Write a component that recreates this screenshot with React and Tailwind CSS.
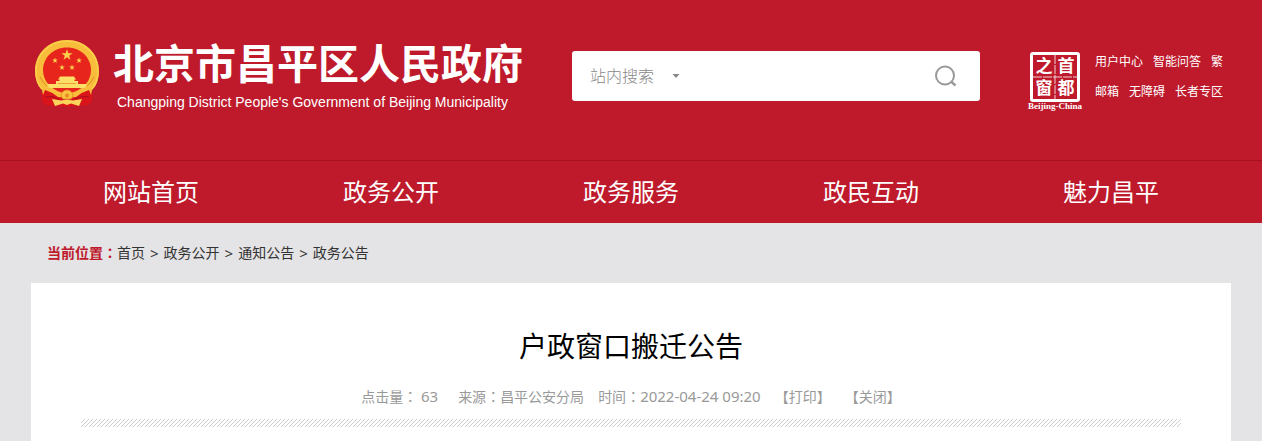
const SANS = "font-['Noto_Sans','Noto_Sans_CJK_SC',sans-serif]";

const NAV = ['网站首页', '政务公开', '政务服务', '政民互动', '魅力昌平'];
const TOP_LINKS = [
  ['用户中心', '智能问答', '繁'],
  ['邮箱', '无障碍', '长者专区'],
];
const CRUMBS = ['首页', '政务公开', '通知公告', '政务公告'];

const STAR =
  'M0 -10 L2.4 -3.2 L9.5 -3.1 L3.8 1.2 L5.9 8.1 L0 4 L-5.9 8.1 L-3.8 1.2 L-9.5 -3.1 L-2.4 -3.2 Z';

function Emblem() {
  return (
    <svg className="h-[68px] w-16 shrink-0" viewBox="0 0 64 68" aria-hidden="true">
      <path d="M8 50 L56 50 Q59 58 55 64 Q49 67 44 65 L38 66 L32 67 L26 66 L20 65 Q14 67 9 64 Q5 58 8 50 Z" fill="#d9141b" />
      <path
        d="M32 0 C14 0 0 13 0 31 C0 39 3 46 7 50 L8 55 L10 50 Q17 52 23 57 L32 58 L41 57 Q47 52 54 50 L56 55 L57 50 C61 46 64 39 64 31 C64 13 50 0 32 0 Z"
        fill="#f8bd3b"
      />
      <path d="M7 49 C2 44 1 37 1 31 C1 14 15 1 32 1 C49 1 63 14 63 31 C63 37 62 44 57 49" fill="none" stroke="#fbd04b" strokeWidth="1.500" />
      <path d="M5 37 Q8 43 12 46 M59 37 Q56 43 52 46" fill="none" stroke="#d98a22" strokeWidth="1" />
      <path d="M32 7.500 C18 7.500 8 18 8 30 C8 42 17 49 25 52 Q32 54 39 52 C47 49 56 42 56 30 C56 18 46 7.500 32 7.500 Z" fill="#e8251d" />
      <g fill="#fbd04b">
        <path d={STAR} transform="translate(32 15) scale(.58)" />
        <path d={STAR} transform="translate(20 20.500) scale(.3)" />
        <path d={STAR} transform="translate(44 20.500) scale(.3)" />
        <path d={STAR} transform="translate(27 27.500) scale(.3)" />
        <path d={STAR} transform="translate(37 27.500) scale(.3)" />
      </g>
      <path
        d="M25 36.500 L39 36.500 L41 39.500 L39.500 39.500 L39.500 41 L43 41 L43 44 L52 44 L50 48 L14 48 L12 44 L21 44 L21 41 L24.500 41 L24.500 39.500 L23 39.500 Z"
        fill="#fbdf66"
      />
      <path d="M23 43.500 L41 43.500" stroke="#ee8a2c" strokeWidth=".8" />
      <path d="M26 56 A6 6 0 0 1 38 56 L36 59 L28 59 Z" fill="#f9c33f" stroke="#e08b20" strokeWidth=".8" />
      <circle cx="32" cy="55.500" r="2" fill="#e58a24" />
      <path d="M10 57 Q17 55 24 59 M54 57 Q47 55 40 59" fill="none" stroke="#a90f1c" strokeWidth="1" />
      <path d="M17 59 L26 60.500 L32 59.500 L38 60.500 L47 59 L44 66 L36 63.500 L32 65 L28 63.500 L20 66 Z" fill="#fbd45c" />
    </svg>
  );
}

function CapitalWindow() {
  return (
    <a href="#" aria-label="首都之窗" className="flex w-14 shrink-0 flex-col items-center">
      <svg className="h-[50px] w-[50px]" viewBox="0 0 50 50" aria-hidden="true">
        <rect x="1.500" y="1.500" width="47" height="47" rx="1.500" fill="none" stroke="#fff" strokeWidth="3" />
        <path d="M25 3 V47 M3 25 H47" stroke="#fff" strokeWidth="1" strokeDasharray="9 1" opacity=".8" />
        <g fill="#fff" fontSize="17" fontWeight="700" fontFamily="'Liberation Sans', 'Noto Sans CJK SC', sans-serif" textAnchor="middle">
          <text x="14" y="20">之</text>
          <text x="36" y="20">首</text>
          <text x="14" y="42">窗</text>
          <text x="36" y="42">都</text>
        </g>
      </svg>
      <span className="font-['Liberation_Serif',serif] text-[9px] leading-[8px] font-bold text-white">Beijing-China</span>
    </a>
  );
}

function Header() {
  return (
    <header className="bg-[#be1a2c] text-white">
      <div className="mx-auto flex max-w-[1200px] items-start pt-10 pb-[50px] pl-1">
        <a href="#" className="flex w-[537px] shrink-0 items-start gap-3.5">
          <Emblem />
          <div className="whitespace-nowrap">
            <h1 className="text-[41px] leading-[46px] font-bold">北京市昌平区人民政府</h1>
            <p className="pt-2 pl-1 font-['Liberation_Sans',sans-serif] text-sm leading-4">
              Changping District People's Government of Beijing Municipality
            </p>
          </div>
        </a>
        <form className="mt-[11px] flex h-[50px] min-w-0 flex-1 items-center rounded-[3px] bg-white pr-[22px] pl-[18px] text-[#999]">
          <div className="relative flex w-24 items-center">
            <select aria-label="搜索范围" className="w-full appearance-none bg-transparent text-base font-light text-[#888] outline-none">
              <option>站内搜索</option>
            </select>
            <svg className="pointer-events-none absolute right-1.5 h-1 w-2" viewBox="0 0 8 4" aria-hidden="true">
              <path d="M0.500 0 H7.500 L4 4 Z" fill="#888" />
            </svg>
          </div>
          <input type="text" aria-label="搜索内容" className="h-full min-w-0 flex-1 bg-transparent px-2 outline-none" />
          <button type="submit" aria-label="搜索">
            <svg className="size-6" viewBox="0 0 24 24" fill="none" stroke="#999" strokeWidth="2" aria-hidden="true">
              <circle cx="11" cy="11.500" r="9" />
              <path d="M17 17.500 L21.500 21.500" strokeWidth="2.500" />
            </svg>
          </button>
        </form>
        <div className="ml-[47px] flex shrink-0 items-start gap-3 pt-3">
          <CapitalWindow />
          <ul className="flex w-[136px] flex-col gap-3 pt-px text-xs leading-[18px] whitespace-nowrap">
            {TOP_LINKS.map((row) => (
              <li key={row[0]} className="flex gap-2.5">
                {row.map((label) => (
                  <a key={label} href="#">{label}</a>
                ))}
              </li>
            ))}
          </ul>
        </div>
      </div>
      <nav className="border-t border-[#a5101f]">
        <ul className="mx-auto grid max-w-[1200px] grid-cols-5 text-center text-2xl leading-[62px]">
          {NAV.map((label) => (
            <li key={label}>
              <a href="#" className="block">{label}</a>
            </li>
          ))}
        </ul>
      </nav>
    </header>
  );
}

function Colon() {
  return <span className="font-['Noto_Sans_CJK_TC',sans-serif] leading-none">：</span>;
}

function Breadcrumb() {
  return (
    <nav aria-label="当前位置" className="flex gap-[5px] px-4 text-sm leading-[60px] text-[#333]">
      {CRUMBS.map((label, i) => (
        <span key={label} className="flex gap-[5px]">
          <span>
            {i === 0 && <span className="font-bold text-[#be1a2c]">当前位置<Colon /></span>}
            <a href="#">{label}</a>
          </span>
          {i < CRUMBS.length - 1 && <span className="text-[15px]">&gt;</span>}
        </span>
      ))}
    </nav>
  );
}

function HatchedRule() {
  return (
    <svg className="block h-2 w-full" aria-hidden="true">
      <defs>
        <pattern id="hatch" width="4" height="4" patternUnits="userSpaceOnUse">
          <path d="M-1 1 L1 -1 M0 4 L4 0 M3 5 L5 3" stroke="#cdcdcd" strokeWidth="1" />
        </pattern>
      </defs>
      <rect width="100%" height="8" fill="url(#hatch)" />
    </svg>
  );
}

export default function App() {
  return (
    <div className={`flex min-h-screen flex-col bg-[#e4e3e5] ${SANS}`}>
      <Header />
      <main className="mx-auto flex w-full max-w-[1200px] flex-1 flex-col">
        <Breadcrumb />
        <article className="flex-1 bg-white px-[50px] pt-10 pb-3">
          <h2 className="text-center text-[28px] leading-[46px] text-black">户政窗口搬迁公告</h2>
          <div className="flex justify-center pt-[18px] pb-3 text-sm leading-5 whitespace-nowrap text-[#999]">
            <span className="mr-5">点击量<Colon /> <span className="text-[15px] leading-none">63</span></span>
            <span className="mr-3.5">来源<Colon />昌平公安分局</span>
            <span className="mr-3.5">时间<Colon /><span className="text-[15px] leading-none">2022-04-24 09:20</span></span>
            <button type="button" className="mr-3.5">【打印】</button>
            <button type="button">【关闭】</button>
          </div>
          <HatchedRule />
        </article>
      </main>
    </div>
  );
}
